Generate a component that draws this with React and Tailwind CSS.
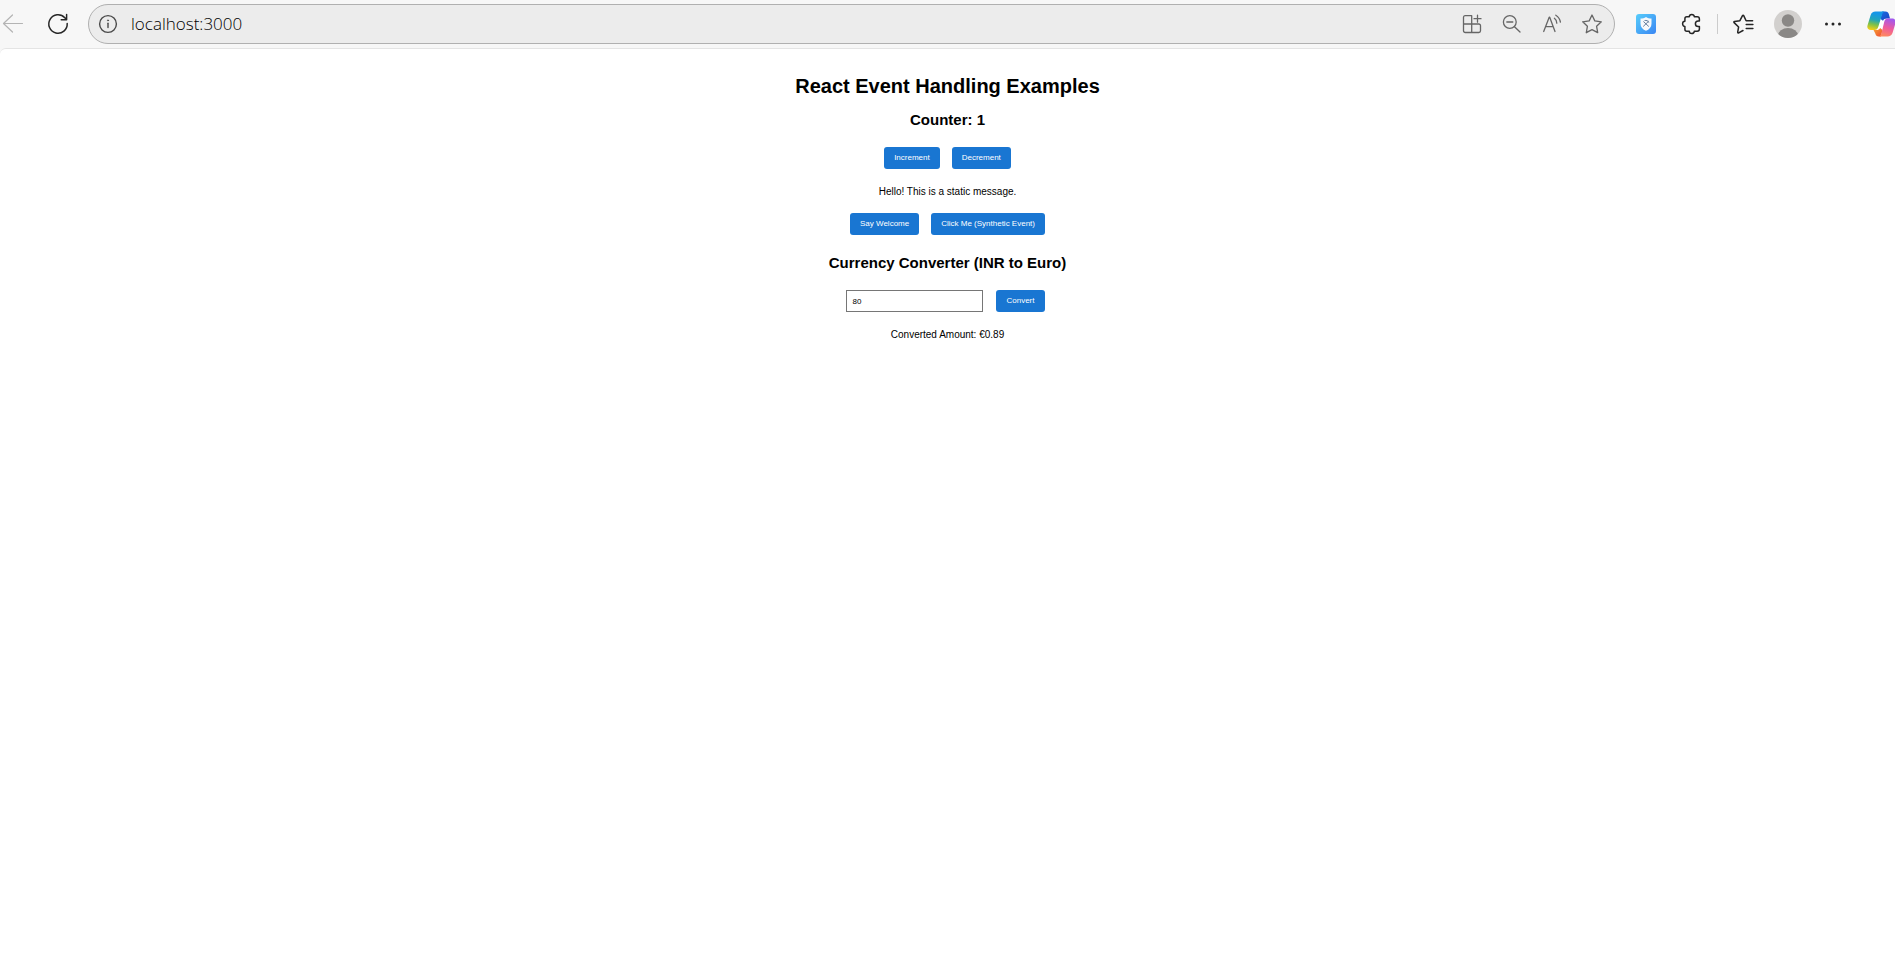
import { useState } from "react";

const line = {
  width: 24,
  height: 24,
  viewBox: "0 0 24 24",
  fill: "none",
  stroke: "currentColor",
  strokeLinecap: "round",
  strokeLinejoin: "round",
  "aria-hidden": true,
};

function IconButton({ label, className = "text-[#262626]", children }) {
  return (
    <button type="button" aria-label={label} className={`shrink-0 ${className}`}>
      {children}
    </button>
  );
}

function BackIcon() {
  return (
    <svg {...line} strokeWidth="1.2">
      <path d="M21.5 11.5H2.5M11.5 3 2.5 11.5l9 8.5" />
    </svg>
  );
}

function ReloadIcon() {
  return (
    <svg {...line} strokeWidth="1.5">
      <path d="M21.2 11.5A9.2 9.2 0 1 1 18.8 5.8L20.5 7.6M20.6 2.4v5.3h-5.4" />
    </svg>
  );
}

function InfoIcon() {
  return (
    <svg {...line} strokeWidth="1.4">
      <circle cx="12" cy="12" r="8.4" />
      <path d="M12 11.3v4.2" />
      <circle cx="12" cy="8.4" r="0.6" fill="currentColor" strokeWidth="0.6" />
    </svg>
  );
}

function AppsIcon() {
  return (
    <svg {...line} strokeWidth="1.3">
      <path d="M5 3.7h6.7v16.8H5.2a1.7 1.7 0 0 1-1.7-1.7V5.3A1.6 1.6 0 0 1 5 3.7ZM3.5 12h15.3a1.7 1.7 0 0 1 1.7 1.7v5.1a1.7 1.7 0 0 1-1.7 1.7h-7.1M17.5 3.2v7M14 6.7h7" />
    </svg>
  );
}

function ZoomOutIcon() {
  return (
    <svg {...line} strokeWidth="1.3">
      <circle cx="9.8" cy="10" r="6.4" />
      <path d="M6.8 10h6M14.5 14.7l5.5 5.3" />
    </svg>
  );
}

function ReadAloudIcon() {
  return (
    <svg {...line} strokeWidth="1.3">
      <path d="M3.700 19.500 9.200 5.200h.5l5.300 14.300M5.600 14.600h7.600M14.400 6.300a6 6 0 0 1 2.400 4.900M15.800 3.200a9.600 9.600 0 0 1 4.600 7" />
    </svg>
  );
}

function StarIcon() {
  return (
    <svg {...line} strokeWidth="1.3">
      <path d="m12 3 2.8 5.9 6.5.9-4.7 4.5 1.1 6.4L12 17.7l-5.700 3 1.100-6.400L2.700 9.800l6.500-.9Z" />
    </svg>
  );
}

function ShieldIcon() {
  return (
    <svg width="24" height="24" viewBox="0 0 24 24" aria-hidden="true">
      <defs>
        <linearGradient id="tile" x1="0" y1="0" x2="1" y2="1">
          <stop offset="0" stopColor="#57cdfb" />
          <stop offset="1" stopColor="#3a86f3" />
        </linearGradient>
      </defs>
      <rect x="2" y="2" width="20" height="20" rx="3" fill="url(#tile)" />
      <path d="M12 5c1.600 1 3.500 1.500 5.500 1.600v5.200c0 3.500-2.300 5.800-5.500 7-3.200-1.200-5.500-3.500-5.500-7V6.600C8.500 6.500 10.400 6 12 5Z" fill="#f7f9fc" />
      <path d="m9.400 9.500 5.400 5M14.800 9l-5.600 5.500M10.500 8.600c2-.6 3.700.2 4.300 2" fill="none" stroke="#667f9e" strokeWidth="1" />
    </svg>
  );
}

function PuzzleIcon() {
  return (
    <svg {...line} strokeWidth="1.5">
      <path d="M6.800 4.800h2.500a2.500 2.300 0 0 1 5 0h2.900c1.400 0 2.200.8 2.200 2.200v2h-1.200a2.800 2.800 0 0 0 0 5.600h1.200v2.500c0 1.400-.8 2.200-2.200 2.200h-2.900a2.500 2.300 0 0 1-5 0H6.800c-1.200 0-1.900-.8-1.900-2v-2.900a2.300 2.600 0 0 1 0-5.200V6.800c0-1.200.7-2 1.900-2Z" />
    </svg>
  );
}

function FavoritesIcon() {
  return (
    <svg {...line} strokeWidth="1.5">
      <path d="m7.600 15-.9 5.200c-.1.700.4 1 1 .7l4.300-2.400M7.600 15l-4.500-4.400c-.5-.5-.2-1.100.4-1.200l5.400-.7 2.600-5.100c.3-.6.9-.6 1.200 0l2.400 5.100h6.500M15.200 12.500h6.700M15.200 16.500h6.700" />
    </svg>
  );
}

function AvatarIcon() {
  return (
    <svg width="28" height="28" viewBox="0 0 28 28" aria-hidden="true">
      <defs>
        <clipPath id="disc">
          <circle cx="14" cy="14" r="14" />
        </clipPath>
      </defs>
      <g clipPath="url(#disc)">
        <rect width="28" height="28" fill="#d2d0ce" />
        <circle cx="14" cy="10.500" r="6.200" fill="#8a8886" />
        <ellipse cx="14" cy="25.500" rx="10" ry="7.500" fill="#8a8886" />
      </g>
    </svg>
  );
}

function MoreIcon() {
  return (
    <svg width="24" height="24" viewBox="0 0 24 24" fill="currentColor" aria-hidden="true">
      <circle cx="5.500" cy="12" r="1.500" />
      <circle cx="12" cy="12" r="1.500" />
      <circle cx="18.500" cy="12" r="1.500" />
    </svg>
  );
}

function CopilotIcon() {
  return (
    <svg width="28" height="28" viewBox="0 0 28 28" aria-hidden="true">
      <defs>
        <linearGradient id="cool" x1="0.500" y1="0" x2="0.300" y2="1">
          <stop offset="0.100" stopColor="#1496e8" />
          <stop offset="0.450" stopColor="#22a6b8" />
          <stop offset="0.700" stopColor="#7cc04b" />
          <stop offset="1" stopColor="#f5cf15" />
        </linearGradient>
        <linearGradient id="warm" x1="0.600" y1="0" x2="0.300" y2="1">
          <stop offset="0" stopColor="#a259ee" />
          <stop offset="0.500" stopColor="#ee5b9e" />
          <stop offset="1" stopColor="#ff8a5c" />
        </linearGradient>
        <linearGradient id="fold" x1="0" y1="0" x2="1" y2="1">
          <stop offset="0" stopColor="#1a6fe0" />
          <stop offset="1" stopColor="#1d3fc4" />
        </linearGradient>
        <linearGradient id="ember" x1="0" y1="0" x2="1" y2="1">
          <stop offset="0" stopColor="#f7a531" />
          <stop offset="1" stopColor="#ee4a35" />
        </linearGradient>
      </defs>
      <path d="M13 8h7l-3 12h-7Z" fill="#ffffff" />
      <path d="M15 1.500h3.500c2 0 2.800 1 3.300 2.600l1.200 4.400h-3c-2.200 0-3.300.8-4 2.200L13.500 9Z" fill="url(#fold)" />
      <path d="M6.500 20h3c1.800 0 2.800-.6 3.600-2l2.400 2-1.500 6.500h-2.300c-2 0-2.800-1-3.300-2.700Z" fill="url(#ember)" />
      <path d="M8.500 1.500h9.200c-1.500.4-2.100 1.500-2.700 3.300l-3.600 11.600C10.700 18.600 9.600 20 7.400 20H4c-3 0-4.200-2-3.500-4.600L3.600 5.300C4.400 2.700 6 1.500 8.500 1.500Z" fill="url(#cool)" />
      <path d="M20.500 8.500H25c3 0 4.200 2 3.500 4.600l-3 10c-.8 2.400-2.500 3.400-5 3.400h-8.800c1.500-.4 2.200-1.500 2.800-3.300l2.700-11.100c.6-2.200 1.300-3.600 3.300-3.600Z" fill="url(#warm)" />
    </svg>
  );
}

function BrowserBar() {
  return (
    <header className="flex h-12 items-center pl-px">
      <IconButton label="Back" className="text-[#b4b4b4]">
        <BackIcon />
      </IconButton>
      <IconButton label="Reload" className="ml-[21px] text-[#262626]">
        <ReloadIcon />
      </IconButton>
      <div className="ml-[18px] flex h-10 flex-1 items-center gap-4 rounded-full border border-[#b0b0b0] bg-[#ececec] pr-[10px] pl-[7px] text-[#666666]">
        <IconButton label="Site information" className="text-[#4a4a4a]">
          <InfoIcon />
        </IconButton>
        <input
          aria-label="Address"
          defaultValue="localhost:3000"
          className="-ml-[5px] min-w-0 flex-1 bg-transparent font-['Open_Sans',sans-serif] text-[17px] font-light text-black outline-none"
        />
        <IconButton label="Install app" className="text-[#666666]">
          <AppsIcon />
        </IconButton>
        <IconButton label="Zoom out" className="text-[#666666]">
          <ZoomOutIcon />
        </IconButton>
        <IconButton label="Read aloud" className="text-[#666666]">
          <ReadAloudIcon />
        </IconButton>
        <IconButton label="Add to favorites" className="text-[#666666]">
          <StarIcon />
        </IconButton>
      </div>
      <div className="ml-[19px] flex items-center">
        <IconButton label="Shield extension">
          <ShieldIcon />
        </IconButton>
        <IconButton label="Extensions" className="ml-[22px] text-[#262626]">
          <PuzzleIcon />
        </IconButton>
        <span className="mx-[13px] h-5 w-px bg-[#cccccc]" />
        <IconButton label="Favorites">
          <FavoritesIcon />
        </IconButton>
        <IconButton label="Profile" className="ml-[19px]">
          <AvatarIcon />
        </IconButton>
        <IconButton label="Settings and more" className="ml-[19px] text-[#262626]">
          <MoreIcon />
        </IconButton>
        <IconButton label="Copilot" className="ml-[22px]">
          <CopilotIcon />
        </IconButton>
      </div>
    </header>
  );
}

function Action({ type = "button", onClick, children }) {
  return (
    <button
      type={type}
      onClick={onClick}
      className="h-[22px] rounded-[3px] bg-[#1976d2] px-[10px] text-[8px] text-white"
    >
      {children}
    </button>
  );
}

export default function App() {
  const [count, setCount] = useState(1);
  const [message, setMessage] = useState("Hello! This is a static message.");
  const [amount, setAmount] = useState("80");
  const [euro, setEuro] = useState("0.89");

  return (
    <div className="flex min-h-screen flex-col bg-[#f7f7f7]">
      <BrowserBar />
      <main className="flex flex-1 flex-col items-center rounded-tl-md border-t border-[#e4e4e4] bg-white pt-[25px] text-center font-['Liberation_Sans',Arial,sans-serif] text-[10px] text-black">
        <h1 className="text-[20px] leading-6 font-bold">React Event Handling Examples</h1>
        <h2 className="mt-[14px] text-[15px] leading-4 font-bold">Counter: {count}</h2>
        <div className="mt-[19px] flex gap-3">
          <Action onClick={() => setCount(count + 1)}>Increment</Action>
          <Action onClick={() => setCount(count - 1)}>Decrement</Action>
        </div>
        <p className="mt-[17px] leading-3">{message}</p>
        <div className="mt-[15px] flex gap-3">
          <Action onClick={() => setMessage("Welcome!")}>Say Welcome</Action>
          <Action onClick={() => setMessage("I was clicked")}>Click Me (Synthetic Event)</Action>
        </div>
        <h2 className="mt-5 text-[15px] leading-4 font-bold">Currency Converter (INR to Euro)</h2>
        <form
          className="mt-[19px] mr-1 flex gap-[13px]"
          onSubmit={(event) => {
            event.preventDefault();
            setEuro((Number(amount) * 0.0111).toFixed(2));
          }}
        >
          <input
            aria-label="Amount in INR"
            value={amount}
            onChange={(event) => setAmount(event.target.value)}
            className="h-[22px] w-[137px] border border-[#767676] px-[5px] text-[8px] text-black"
          />
          <Action type="submit">Convert</Action>
        </form>
        <p className="mt-[17px] leading-3">Converted Amount: €{euro}</p>
      </main>
    </div>
  );
}
